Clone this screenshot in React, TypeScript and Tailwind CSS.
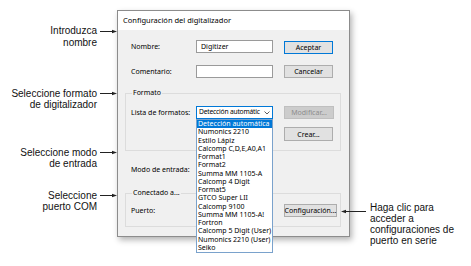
import React from "react";

const items = [
  "Detección automática",
  "Numonics 2210",
  "Estilo Lápiz",
  "Calcomp C,D,E,A0,A1",
  "Format1",
  "Format2",
  "Summa MM 1105-A",
  "Calcomp 4 Digit",
  "Format5",
  "GTCO Super LII",
  "Calcomp 9100",
  "Summa MM 1105-A!",
  "Fortron",
  "Calcomp 5 Digit (User)",
  "Numonics 2210 (User)",
  "Seiko",
];

function ArrowRight() {
  return (
    <svg width="20" height="5" viewBox="0 0 20 5" className="shrink-0">
      <line x1="3" y1="2.5" x2="17" y2="2.5" stroke="#222" strokeWidth="1" />
      <polygon points="15,0.8 20,2.5 15,4.2" fill="#222" />
    </svg>
  );
}

function ArrowLeft() {
  return (
    <svg width="29" height="5" viewBox="0 0 29 5" className="shrink-0">
      <line x1="3" y1="2.5" x2="25" y2="2.5" stroke="#222" strokeWidth="1" />
      <polygon points="5,0.8 0,2.5 5,4.2" fill="#222" />
    </svg>
  );
}

function Callout({ lines, className }: { lines: string[]; className?: string }) {
  return (
    <div className={"flex items-start " + (className ?? "")}>
      <div className="w-[97px] text-right leading-[11.5px]">
        {lines.map((l) => (
          <div key={l}>{l}</div>
        ))}
      </div>
      <div className="mt-[3.5px]">
        <ArrowRight />
      </div>
    </div>
  );
}

function Btn({
  children,
  className,
}: {
  children: React.ReactNode;
  className?: string;
}) {
  return (
    <div
      className={
        "h-[13px] flex items-center justify-center border text-[7px] leading-none " +
        (className ?? "")
      }
    >
      {children}
    </div>
  );
}

export default function App() {
  return (
    <div className="w-[471px] h-[266px] bg-white flex overflow-hidden text-black">
      {/* left annotations */}
      <div className="w-[117px] shrink-0 pt-[25px] font-['Liberation_Sans',Arial,sans-serif] text-[10px] text-[#111]">
        <Callout lines={["Introduzca", "nombre"]} />
        <Callout lines={["Seleccione formato", "de digitalizador"]} className="mt-[39.5px]" />
        <Callout lines={["Seleccione modo", "de entrada"]} className="mt-[36px]" />
        <Callout lines={["Seleccione", "puerto COM"]} className="mt-[20px]" />
      </div>

      {/* dialog */}
      <div className="mt-[10px] w-[233px] h-[227px] shrink-0 border border-[#8c8c8c] bg-[#f0f0f0] shadow-[2px_3px_6px_rgba(0,0,0,0.3)] flex flex-col font-['Noto_Sans',sans-serif] text-[7px] leading-none">
        <div className="h-[19px] bg-white flex items-center pl-[5px] text-[7.5px]">
          Configuración del digitalizador
        </div>
        <div className="flex flex-col px-[7px]">
          {/* Nombre */}
          <div className="mt-[10px] h-[13px] flex items-center pl-[6px]">
            <div className="w-[65px]">Nombre:</div>
            <div className="w-[77px] h-[13px] bg-white border border-[#9a9a9a] flex items-center pl-[4px]">
              Digitizer
            </div>
            <Btn className="ml-[11px] w-[49px] bg-[#e1e1e1] border-[#0078d7] mt-[1px]">Aceptar</Btn>
          </div>
          {/* Comentario */}
          <div className="mt-[12px] h-[13px] flex items-center pl-[6px]">
            <div className="w-[65px]">Comentario:</div>
            <div className="w-[77px] h-[13px] bg-white border border-[#9a9a9a]" />
            <Btn className="ml-[11px] w-[49px] bg-[#e1e1e1] border-[#adadad]">Cancelar</Btn>
          </div>
          {/* Formato group */}
          <fieldset className="mt-[10px] w-[216px] border border-[#dcdcdc] pl-[5px] pb-[9px]">
            <legend className="ml-[1px] px-[1px] h-[10px] leading-[10px]">Formato</legend>
            <div className="mt-[8px] h-[13px] flex items-center">
              <div className="w-[65px]">Lista de formatos:</div>
              <div className="relative w-[77px] h-[13px]">
                <div className="w-full h-full bg-white border border-[#0078d7] flex items-center pl-[2px] pr-[2px]">
                  <span className="flex-1 whitespace-nowrap text-[6.7px] tracking-[-0.2px]">Detección automátic</span>
                  <svg width="6" height="4" viewBox="0 0 6 4" className="shrink-0 ml-[1px]">
                    <polyline points="0.5,0.5 3,3 5.5,0.5" fill="none" stroke="#333" strokeWidth="0.8" />
                  </svg>
                </div>
                <div className="absolute left-0 top-full w-[77px] z-10 bg-white border border-[#7aa2cc] flex flex-col">
                  {items.map((it, i) => (
                    <div
                      key={it}
                      className={
                        "h-[8.25px] leading-[8.25px] pl-[1px] whitespace-nowrap overflow-hidden " +
                        (i === 0 ? "bg-[#0078d7] text-white" : "")
                      }
                    >
                      {it}
                    </div>
                  ))}
                </div>
              </div>
              <Btn className="ml-[11px] w-[50px] bg-[#cccccc] border-[#bfbfbf] text-[#8d8d8d]">Modificar...</Btn>
            </div>
            <div className="mt-[8px] h-[14px] flex items-center pl-[153px]">
              <Btn className="w-[49px] h-[14px] bg-[#e1e1e1] border-[#adadad]">Crear...</Btn>
            </div>
          </fieldset>
          {/* Modo de entrada */}
          <div className="mt-[11.5px] h-[13px] flex items-center pl-[6px]">
            <div>Modo de entrada:</div>
          </div>
          {/* Conectado group */}
          <fieldset className="mt-[12.5px] w-[216px] border border-[#dcdcdc] pl-[5px] pb-[9px]">
            <legend className="ml-[1px] px-[1px] h-[10px] leading-[10px]">Conectado a...</legend>
            <div className="mt-[6px] h-[13px] flex items-center">
              <div className="w-[153px]">Puerto:</div>
              <Btn className="w-[53px] bg-[#e1e1e1] border-[#adadad]">Configuración...</Btn>
            </div>
          </fieldset>
        </div>
      </div>

      {/* right annotation */}
      <div className="ml-[-9px] pt-[201.5px] flex items-start font-['Liberation_Sans',Arial,sans-serif] text-[10px] text-[#111] relative z-20">
        <div className="mt-[7px]">
          <ArrowLeft />
        </div>
        <div className="leading-[11px]">
          <div>Haga clic para</div>
          <div>acceder a</div>
          <div>configuraciones de</div>
          <div>puerto en serie</div>
        </div>
      </div>
    </div>
  );
}
